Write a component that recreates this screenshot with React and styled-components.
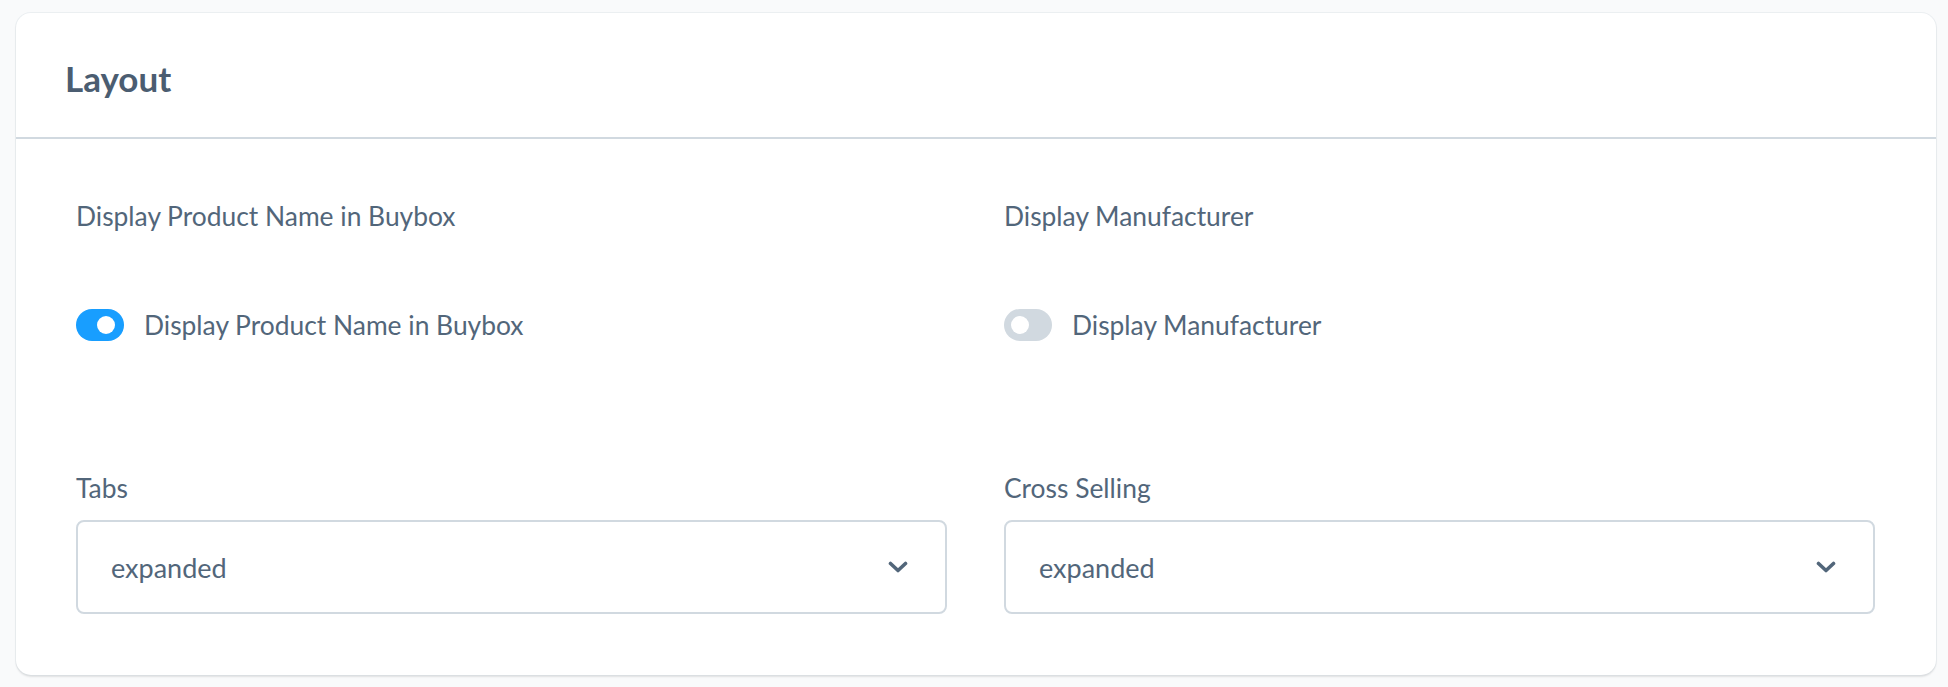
import React from 'react';
import styled, { createGlobalStyle } from 'styled-components';

const GlobalStyle = createGlobalStyle`
    body {
        margin: 0;
        background: #f9fafb;
        font-family: Lato, "Liberation Sans", sans-serif;
        color: #52667a;
    }
`;

const Page = styled.div`
    padding: 13px 12px 12px 16px;
`;

const Card = styled.div`
    background: #ffffff;
    border-radius: 15px;
    box-shadow: 0 0 0 1px rgba(209, 217, 224, 0.35), 0 2px 2px rgba(0, 0, 0, 0.1);
`;

const CardHeader = styled.div`
    height: 126px;
    display: flex;
    align-items: center;
    padding: 6px 49px 0;
    box-sizing: border-box;
    border-bottom: 2px solid #d1d9e0;
`;

const CardTitle = styled.h2`
    margin: 0;
    font-size: 35px;
    font-weight: 700;
    color: #4b5d71;
`;

const CardBody = styled.div`
    display: grid;
    grid-template-columns: 1fr 1fr;
    column-gap: 57px;
    row-gap: 129px;
    padding: 59px 61px 61px 60px;
`;

const Field = styled.div`
    display: flex;
    flex-direction: column;
`;

const FieldLabel = styled.div`
    height: 36px;
    line-height: 36px;
    font-size: 26.4px;
    margin-bottom: ${p => p.$gap}px;
`;

const SwitchRow = styled.label`
    display: flex;
    align-items: center;
    gap: 20px;
    height: 32px;
    font-size: 26.4px;
`;

const Switch = styled.span`
    position: relative;
    width: 48px;
    height: 32px;
    border-radius: 16px;
    background: ${p => (p.$on ? '#189eff' : '#d1d9e0')};
    flex-shrink: 0;

    &::after {
        content: '';
        position: absolute;
        top: 7px;
        left: ${p => (p.$on ? '21px' : '7px')};
        width: 18px;
        height: 18px;
        border-radius: 50%;
        background: #ffffff;
    }
`;

const Select = styled.div`
    height: 94px;
    box-sizing: border-box;
    border: 2px solid #d1d9e0;
    border-radius: 8px;
    display: flex;
    align-items: center;
    justify-content: space-between;
    padding: 0 37px 0 33px;
    font-size: 27px;
    color: #52667a;
`;

const Chevron = () => (
    <svg width="20" height="12" viewBox="0 0 20 12" fill="none">
        <polyline points="2.5,2.5 10,9.5 17.5,2.5" stroke="#52667a" strokeWidth="3.6" strokeLinecap="round" strokeLinejoin="round" />
    </svg>
);

function SwitchField({ label, on }) {
    return (
        <Field>
            <FieldLabel $gap={75}>{label}</FieldLabel>
            <SwitchRow>
                <Switch $on={on} />
                {label}
            </SwitchRow>
        </Field>
    );
}

function SelectField({ label, value }) {
    return (
        <Field>
            <FieldLabel $gap={14}>{label}</FieldLabel>
            <Select>
                {value}
                <Chevron />
            </Select>
        </Field>
    );
}

export default function App() {
    return (
        <>
            <GlobalStyle />
            <Page>
                <Card>
                    <CardHeader>
                        <CardTitle>Layout</CardTitle>
                    </CardHeader>
                    <CardBody>
                        <SwitchField label="Display Product Name in Buybox" on />
                        <SwitchField label="Display Manufacturer" />
                        <SelectField label="Tabs" value="expanded" />
                        <SelectField label="Cross Selling" value="expanded" />
                    </CardBody>
                </Card>
            </Page>
        </>
    );
}
